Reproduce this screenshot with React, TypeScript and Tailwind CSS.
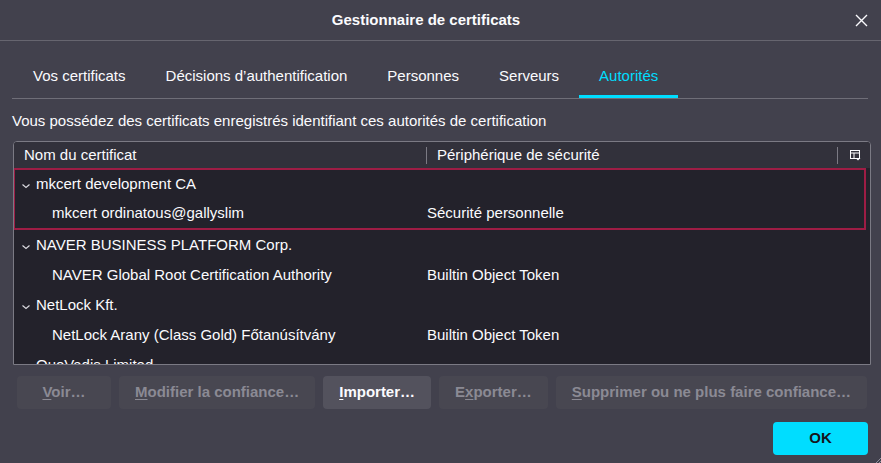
import React from 'react';

type Cert = { name: string; device?: string; parent?: boolean };

const tabs = ['Vos certificats', 'Décisions d’authentification', 'Personnes', 'Serveurs', 'Autorités'];

const selected: Cert[] = [
  { name: 'mkcert development CA', parent: true },
  { name: 'mkcert ordinatous@gallyslim', device: 'Sécurité personnelle' },
];

const others: Cert[] = [
  { name: 'NAVER BUSINESS PLATFORM Corp.', parent: true },
  { name: 'NAVER Global Root Certification Authority', device: 'Builtin Object Token' },
  { name: 'NetLock Kft.', parent: true },
  { name: 'NetLock Arany (Class Gold) Főtanúsítvány', device: 'Builtin Object Token' },
  { name: 'QuoVadis Limited', parent: true },
];

function Chevron() {
  return (
    <svg width="8" height="8" viewBox="0 0 8 8" className="mr-[6px] mt-[3px] shrink-0">
      <polyline points="0.5,2.5 4,5.5 7.5,2.5" fill="none" stroke="#d8d8de" strokeWidth="1.2" />
    </svg>
  );
}

function Row({ cert, inGroup }: { cert: Cert; inGroup?: boolean }) {
  return (
    <div
      className={
        inGroup
          ? 'grid grid-cols-[405px_1fr] pl-[7px] h-[29px] items-center'
          : 'grid grid-cols-[405px_1fr] pl-[8px] h-[30px] items-center'
      }
    >
      <div className="flex items-center whitespace-nowrap">
        {cert.parent ? <Chevron /> : <span className="w-[30px] shrink-0" />}
        <span>{cert.name}</span>
      </div>
      <div className="whitespace-nowrap">{cert.device}</div>
    </div>
  );
}

function Btn({ label, accessIdx, enabled }: { label: string; accessIdx: number; enabled?: boolean }) {
  return (
    <button
      className={
        enabled
          ? 'h-[33px] px-4 rounded-[4px] bg-[#53525d] text-[#fbfbfe] font-bold whitespace-nowrap'
          : 'h-[33px] px-4 rounded-[4px] bg-[#484751] text-[#8b8a94] font-bold whitespace-nowrap min-w-[94px]'
      }
    >
      {label.slice(0, accessIdx)}
      <span className="underline underline-offset-2">{label[accessIdx]}</span>
      {label.slice(accessIdx + 1)}
    </button>
  );
}

export default function App() {
  return (
    <div className="w-[881px] h-[463px] bg-[#42414d] text-[#fbfbfe] text-[15px] font-['Liberation_Sans',Arial,sans-serif] relative overflow-hidden">
      {/* barre de titre */}
      <div className="flex items-center h-[41px] border-b border-[#66656f]">
        <div className="flex-1 text-center font-bold">Gestionnaire de certificats</div>
        <button className="w-[18px] h-[18px] mr-[11px] flex items-center justify-center">
          <svg width="13" height="13" viewBox="0 0 13 13">
            <path d="M1 1 L12 12 M12 1 L1 12" stroke="#fbfbfe" strokeWidth="1.4" />
          </svg>
        </button>
      </div>

      <div className="pl-[12px] pr-[13px]">
        {/* onglets */}
        <div className="flex mt-[14px] border-b border-[#6f6e78]">
          {tabs.map((t, i) => (
            <div
              key={t}
              className={
                i === 0
                  ? 'ml-px h-[43px] px-5 flex items-center whitespace-nowrap'
                  : i === tabs.length - 1
                  ? 'h-[43px] px-5 flex items-center whitespace-nowrap text-[#00ddff] border-b-[3px] border-[#00ddff] -mb-px pt-[3px]'
                  : 'h-[43px] px-5 flex items-center whitespace-nowrap'
              }
            >
              {t}
            </div>
          ))}
        </div>

        <p className="mt-[13px] leading-[18px]">
          Vous possédez des certificats enregistrés identifiant ces autorités de certification
        </p>

        {/* liste des autorités */}
        <div className="mt-[11px] ml-px w-[858px] h-[224px] border border-[#7b7a84] rounded-t-[4px] overflow-hidden bg-[#23222b]">
          <div className="flex items-center h-[26px] bg-[#32313b]">
            <div className="w-[412px] pl-[10px]">Nom du certificat</div>
            <div className="w-px h-[17px] bg-[#7b7a84]" />
            <div className="flex-1 pl-[10px]">Périphérique de sécurité</div>
            <div className="w-px h-[17px] bg-[#7b7a84]" />
            <div className="w-[32px] flex justify-center pl-[2px]">
              <svg width="11" height="11" viewBox="0 0 11 11">
                <rect x="0.5" y="0.5" width="9" height="8" fill="none" stroke="#fbfbfe" strokeWidth="1" />
                <path d="M0.5 3 H9.5 M4 3 V8.5" stroke="#fbfbfe" strokeWidth="1" />
                <path d="M5.5 8 H10.5 L8 10.5 Z" fill="#fbfbfe" />
              </svg>
            </div>
          </div>
          <div className="-ml-px w-[853px] border-2 border-[#9e1d45]">
            {selected.map((c) => (
              <Row key={c.name} cert={c} inGroup />
            ))}
          </div>
          {others.map((c) => (
            <Row key={c.name} cert={c} />
          ))}
        </div>
      </div>

      {/* actions */}
      <div className="flex gap-2 mt-[11px] pl-[17px]">
        <Btn label="Voir…" accessIdx={0} />
        <Btn label="Modifier la confiance…" accessIdx={0} />
        <Btn label="Importer…" accessIdx={0} enabled />
        <Btn label="Exporter…" accessIdx={1} />
        <Btn label="Supprimer ou ne plus faire confiance…" accessIdx={0} />
      </div>

      <div className="flex justify-end mt-[13px] pr-[13px]">
        <button className="w-[95px] h-[33px] rounded-[4px] bg-[#00ddff] text-[#15141a] font-bold">OK</button>
      </div>

      <svg width="6" height="6" viewBox="0 0 6 6" className="absolute right-0 bottom-0">
        <path d="M6 1 L1 6 M6 4 L4 6" stroke="#8f8f9d" strokeWidth="1" />
      </svg>
    </div>
  );
}
